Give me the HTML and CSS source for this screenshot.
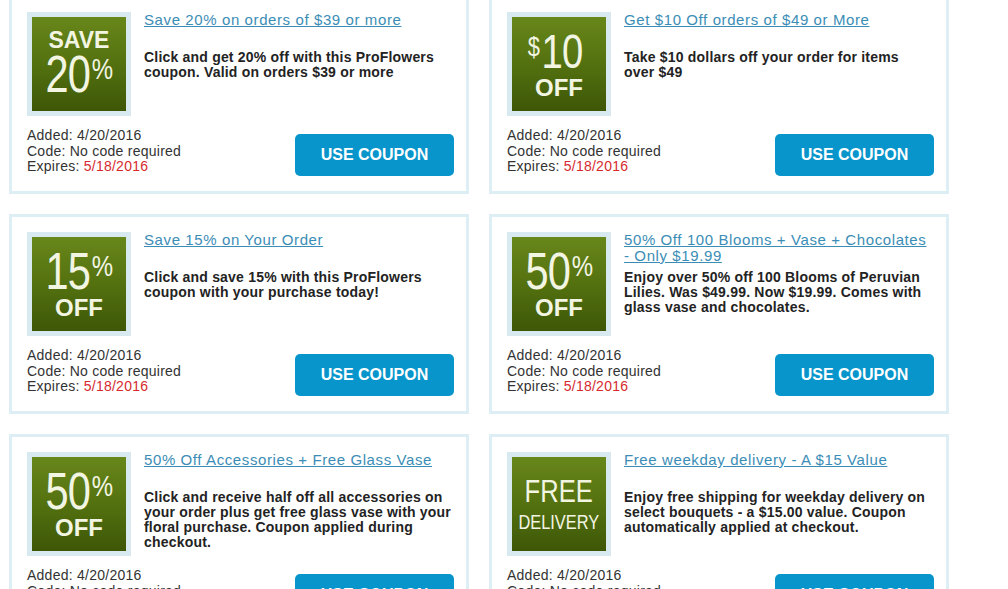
FILE: index.html
```html
<!DOCTYPE html>
<html lang="en">
<head>
<meta charset="utf-8">
<title>ProFlowers Coupons</title>
<link rel="stylesheet" href="styles.css">
</head>
<body>
<div class="grid">

  <div class="card">
    <div class="top">
      <div class="badge"><div class="badge-inner">
        <div class="word">SAVE</div>
        <div class="num-line"><span class="num">20</span><span class="pct">%</span></div>
      </div></div>
      <div class="info">
        <a class="title" href="#">Save 20% on orders of $39 or more</a>
        <p class="desc">Click and get 20% off with this ProFlowers coupon. Valid on orders $39 or more</p>
      </div>
    </div>
    <div class="bottom">
      <div class="meta">Added: 4/20/2016<br>Code: No code required<br>Expires: <span class="exp">5/18/2016</span></div>
      <a class="btn" href="#">USE COUPON</a>
    </div>
  </div>

  <div class="card">
    <div class="top">
      <div class="badge"><div class="badge-inner off-badge">
        <div class="num-line dollar-line"><span class="dollar">$</span><span class="num">10</span></div>
        <div class="off">OFF</div>
      </div></div>
      <div class="info">
        <a class="title" href="#">Get $10 Off orders of $49 or More</a>
        <p class="desc">Take $10 dollars off your order for items over $49</p>
      </div>
    </div>
    <div class="bottom">
      <div class="meta">Added: 4/20/2016<br>Code: No code required<br>Expires: <span class="exp">5/18/2016</span></div>
      <a class="btn" href="#">USE COUPON</a>
    </div>
  </div>

  <div class="card">
    <div class="top">
      <div class="badge"><div class="badge-inner off-badge">
        <div class="num-line"><span class="num">15</span><span class="pct">%</span></div>
        <div class="off">OFF</div>
      </div></div>
      <div class="info">
        <a class="title" href="#">Save 15% on Your Order</a>
        <p class="desc">Click and save 15% with this ProFlowers coupon with your purchase today!</p>
      </div>
    </div>
    <div class="bottom">
      <div class="meta">Added: 4/20/2016<br>Code: No code required<br>Expires: <span class="exp">5/18/2016</span></div>
      <a class="btn" href="#">USE COUPON</a>
    </div>
  </div>

  <div class="card">
    <div class="top">
      <div class="badge"><div class="badge-inner off-badge">
        <div class="num-line"><span class="num">50</span><span class="pct">%</span></div>
        <div class="off">OFF</div>
      </div></div>
      <div class="info">
        <a class="title" href="#">50% Off 100 Blooms + Vase + Chocolates - Only $19.99</a>
        <p class="desc">Enjoy over 50% off 100 Blooms of Peruvian Lilies. Was $49.99. Now $19.99. Comes with glass vase and chocolates.</p>
      </div>
    </div>
    <div class="bottom">
      <div class="meta">Added: 4/20/2016<br>Code: No code required<br>Expires: <span class="exp">5/18/2016</span></div>
      <a class="btn" href="#">USE COUPON</a>
    </div>
  </div>

  <div class="card">
    <div class="top">
      <div class="badge"><div class="badge-inner off-badge">
        <div class="num-line"><span class="num">50</span><span class="pct">%</span></div>
        <div class="off">OFF</div>
      </div></div>
      <div class="info">
        <a class="title" href="#">50% Off Accessories + Free Glass Vase</a>
        <p class="desc">Click and receive half off all accessories on your order plus get free glass vase with your floral purchase. Coupon applied during checkout.</p>
      </div>
    </div>
    <div class="bottom">
      <div class="meta">Added: 4/20/2016<br>Code: No code required<br>Expires: <span class="exp">5/18/2016</span></div>
      <a class="btn" href="#">USE COUPON</a>
    </div>
  </div>

  <div class="card">
    <div class="top">
      <div class="badge"><div class="badge-inner free-badge">
        <div class="free">FREE</div>
        <div class="delivery">DELIVERY</div>
      </div></div>
      <div class="info">
        <a class="title" href="#">Free weekday delivery - A $15 Value</a>
        <p class="desc">Enjoy free shipping for weekday delivery on select bouquets - a $15.00 value. Coupon automatically applied at checkout.</p>
      </div>
    </div>
    <div class="bottom">
      <div class="meta">Added: 4/20/2016<br>Code: No code required<br>Expires: <span class="exp">5/18/2016</span></div>
      <a class="btn" href="#">USE COUPON</a>
    </div>
  </div>

</div>
</body>
</html>
```

FILE: styles.css
```css
html, body {
  margin: 0;
  padding: 0;
  background: #ffffff;
}

body {
  font-family: "Liberation Sans", Arial, sans-serif;
  color: #333333;
  overflow: hidden;
}

.grid {
  display: grid;
  grid-template-columns: repeat(2, 460px);
  gap: 20px;
  margin: -6px 0 0 9px;
}

.card {
  box-sizing: border-box;
  height: 200px;
  border: 3px solid #ddeef5;
  padding: 15px 12px 0 15px;
  display: flex;
  flex-direction: column;
}

.top {
  display: flex;
  gap: 13px;
  height: 104px;
}

.badge {
  box-sizing: border-box;
  flex: 0 0 104px;
  width: 104px;
  height: 104px;
  padding: 5px;
  background: #d8eaf0;
}

.badge-inner {
  width: 94px;
  height: 94px;
  background: linear-gradient(to bottom, #68871a 0%, #547110 50%, #3d5707 100%);
  color: #f3f5e3;
  display: flex;
  flex-direction: column;
  align-items: center;
  justify-content: center;
  text-align: center;
  overflow: hidden;
}

.word {
  font-weight: bold;
  font-size: 23px;
  line-height: 24px;
  margin-top: -4px;
}

.num-line {
  display: inline-block;
  white-space: nowrap;
  transform: scaleX(0.8);
  font-size: 52px;
  line-height: 44px;
  height: 44px;
}

.dollar-line {
  font-size: 49px;
  transform: scaleX(0.78);
  margin-left: -8px;
}

.num {
  font-weight: normal;
  letter-spacing: -1px;
}

.pct, .dollar {
  display: inline-block;
  vertical-align: top;
  font-weight: normal;
  font-size: 30px;
  line-height: 30px;
  margin-top: 2px;
}

.pct {
  margin-left: 2px;
}

.dollar {
  font-size: 28px;
  margin-top: 3px;
  margin-right: 2px;
}

.off {
  font-weight: bold;
  font-size: 24px;
  line-height: 22px;
  margin-top: 4px;
}

.free {
  font-size: 32px;
  line-height: 30px;
  transform: scaleX(0.8);
  white-space: nowrap;
}

.delivery {
  font-size: 21px;
  line-height: 22px;
  margin-top: 5px;
  transform: scaleX(0.78);
  white-space: nowrap;
}

.info {
  flex: 1;
  min-width: 0;
}

.title {
  display: block;
  min-height: 32px;
  font-size: 15px;
  line-height: 16px;
  letter-spacing: 0.6px;
  color: #3b8db6;
  text-decoration: underline;
}

.desc {
  margin: 6px 0 0;
  padding-right: 1.5px;
  font-weight: bold;
  font-size: 14px;
  line-height: 15px;
  letter-spacing: 0.2px;
  color: #232323;
}

.bottom {
  display: flex;
  justify-content: space-between;
  align-items: flex-start;
  margin-top: 12px;
}

.meta {
  font-size: 14px;
  line-height: 15.5px;
  letter-spacing: 0.25px;
  color: #333333;
}

.exp {
  color: #d6292e;
}

.btn {
  box-sizing: border-box;
  width: 159px;
  height: 42px;
  margin-top: 6px;
  display: flex;
  align-items: center;
  justify-content: center;
  background: #0795cb;
  border-radius: 5px;
  color: #ffffff;
  font-weight: bold;
  font-size: 16px;
  text-decoration: none;
}
```
